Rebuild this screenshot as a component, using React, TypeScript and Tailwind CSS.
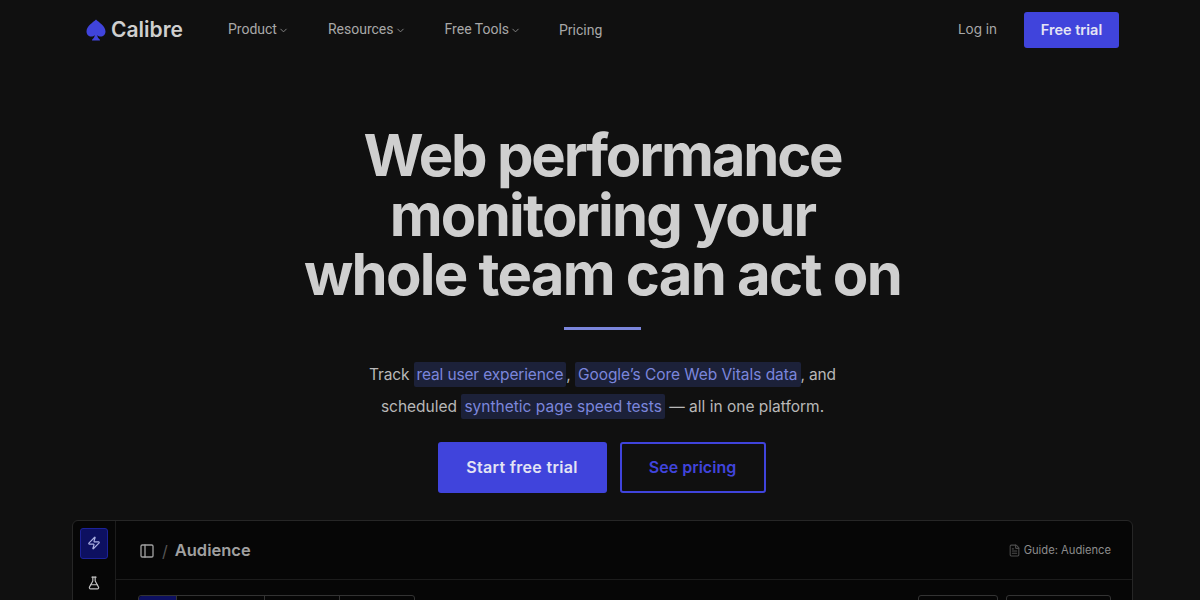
/**
 * Calibre landing page hero with dashboard preview
 */

import React from 'react';
import { ChevronDown, Zap, FlaskConical, PanelLeft, FileText } from 'lucide-react';

const navItems = ['Product', 'Resources', 'Free Tools'];

const Mark = ({ children }: { children: React.ReactNode }) => (
  <span className="bg-[#1c2139] text-[#7b86dc] rounded-[2px] px-[3px] py-[3px]">{children}</span>
);

export default function App() {
  return (
    <div className="h-[600px] overflow-hidden bg-[#101010] font-['Inter',sans-serif]">
      {/* Nav */}
      <nav className="h-[59px] pl-[86px] pr-[81px] flex items-center">
        <div className="flex items-center gap-[5px] w-[142px]">
          <svg viewBox="0 0 20 22" className="w-[20px] h-[22px] text-[#4044dc]" fill="currentColor">
            <path d="M10 0.5 C13 3.5 19.5 7 19.5 12.5 C19.5 15.5 17.2 17.5 14.8 17.5 C13.4 17.5 12 17 11.2 16 C11.4 17.8 12.2 19.2 13.8 20.5 L14 21.5 L6 21.5 L6.2 20.5 C7.8 19.2 8.6 17.8 8.8 16 C8 17 6.6 17.5 5.2 17.5 C2.8 17.5 0.5 15.5 0.5 12.5 C0.5 7 7 3.5 10 0.5 Z" />
          </svg>
          <span className="text-[21px] font-semibold text-[#cfcfcf]">Calibre</span>
        </div>
        <div className="flex items-center gap-[39px] font-['Roboto',sans-serif] text-[14px] text-[#a8a8a8]">
          {navItems.map((item) => (
            <span key={item} className="flex items-center gap-[1px]">
              {item}
              <ChevronDown className="w-[11px] h-[11px] mt-[2px] text-[#8a8a8a]" />
            </span>
          ))}
          <span className="mt-[1px] -ml-[1px]">Pricing</span>
        </div>
        <div className="ml-auto flex items-center gap-[27px]">
          <span className="text-[13.5px] text-[#a8a8a8]">Log in</span>
          <span className="h-[36px] w-[95px] flex items-center justify-center rounded-[3px] bg-[#4044dc] text-[14.5px] font-semibold text-[#e4e4f4]">
            Free trial
          </span>
        </div>
      </nav>

      {/* Hero */}
      <main className="flex flex-col items-center pl-[5px]">
        <h1 className="mt-[67px] text-center text-[58px] leading-[59.5px] font-bold tracking-[-1.75px] text-[#cfcfcf]">
          <span className="tracking-[-2.2px]">Web performance</span>
          <br />
          monitoring your
          <br />
          whole team can act on
        </h1>
        <div className="mt-[22px] w-[77px] h-[3px] bg-[#7b86dc]" />
        <p className="mt-[29px] text-center text-[15.5px] leading-[32.5px] tracking-[-0.15px] text-[#b8b8b8]">
          Track <Mark>real user experience</Mark>,{' '}
          <span className="tracking-[-0.05px]">
            <Mark>Google’s Core Web Vitals data</Mark>
          </span>
          , and
          <br />
          <span className="tracking-[0px]">
            scheduled <Mark>synthetic page speed tests</Mark> — all in one platform.
          </span>
        </p>
        <div className="mt-[18px] -ml-[2px] flex gap-[13px]">
          <span className="w-[169px] h-[51px] flex items-center justify-center rounded-[3px] bg-[#4044dc] text-[16px] tracking-[0.3px] font-semibold text-[#e4e4f4]">
            Start free trial
          </span>
          <span className="w-[146px] h-[51px] flex items-center justify-center rounded-[3px] border-2 border-[#4044dc] text-[16px] font-semibold text-[#4044dc]">
            See pricing
          </span>
        </div>
      </main>

      {/* Dashboard preview */}
      <section className="mt-[27px] ml-[72px] w-[1061px] h-[200px] flex rounded-t-[6px] border border-[#262626] bg-[#060606]">
        <aside className="w-[43px] shrink-0 border-r border-[#1c1c1c] flex flex-col items-center pt-[7px] gap-[17px]">
          <div className="w-[28px] h-[31px] flex items-center justify-center rounded-[3px] border border-[#1c2299] bg-[#0d1060]">
            <Zap className="w-[14px] h-[14px] text-[#a9aee0]" />
          </div>
          <FlaskConical className="w-[14px] h-[14px] text-[#c4c4c4]" />
        </aside>
        <div className="flex-1">
          <div className="h-[59px] pt-[2px] border-b border-[#1c1c1c] pl-[23px] pr-[21px] flex items-center">
            <PanelLeft className="w-[16px] h-[16px] text-[#a0a0a0]" />
            <span className="ml-[7px] text-[16px] text-[#555]">/</span>
            <span className="ml-[7px] text-[16.5px] font-semibold text-[#a0a0a0]">Audience</span>
            <FileText className="ml-auto w-[13px] h-[13px] text-[#4c4c4c]" />
            <span className="ml-[3px] text-[11.2px] text-[#8c8c8c]">Guide: Audience</span>
          </div>
          <div className="mt-[15px] pl-[22px] pr-[21px] flex">
            <div className="flex h-[40px] rounded-t-[3px] border border-[#333]">
              <div className="w-[37px] bg-[#0d1060] rounded-tl-[3px]" />
              <div className="w-[88px] border-l border-[#333]" />
              <div className="w-[75px] border-l border-[#333]" />
              <div className="w-[75px] border-l border-[#333]" />
            </div>
            <div className="ml-auto flex gap-[8px]">
              <div className="w-[80px] h-[40px] rounded-t-[3px] border border-[#333]" />
              <div className="w-[105px] h-[40px] rounded-t-[3px] border border-[#333]" />
            </div>
          </div>
        </div>
      </section>
    </div>
  );
}
